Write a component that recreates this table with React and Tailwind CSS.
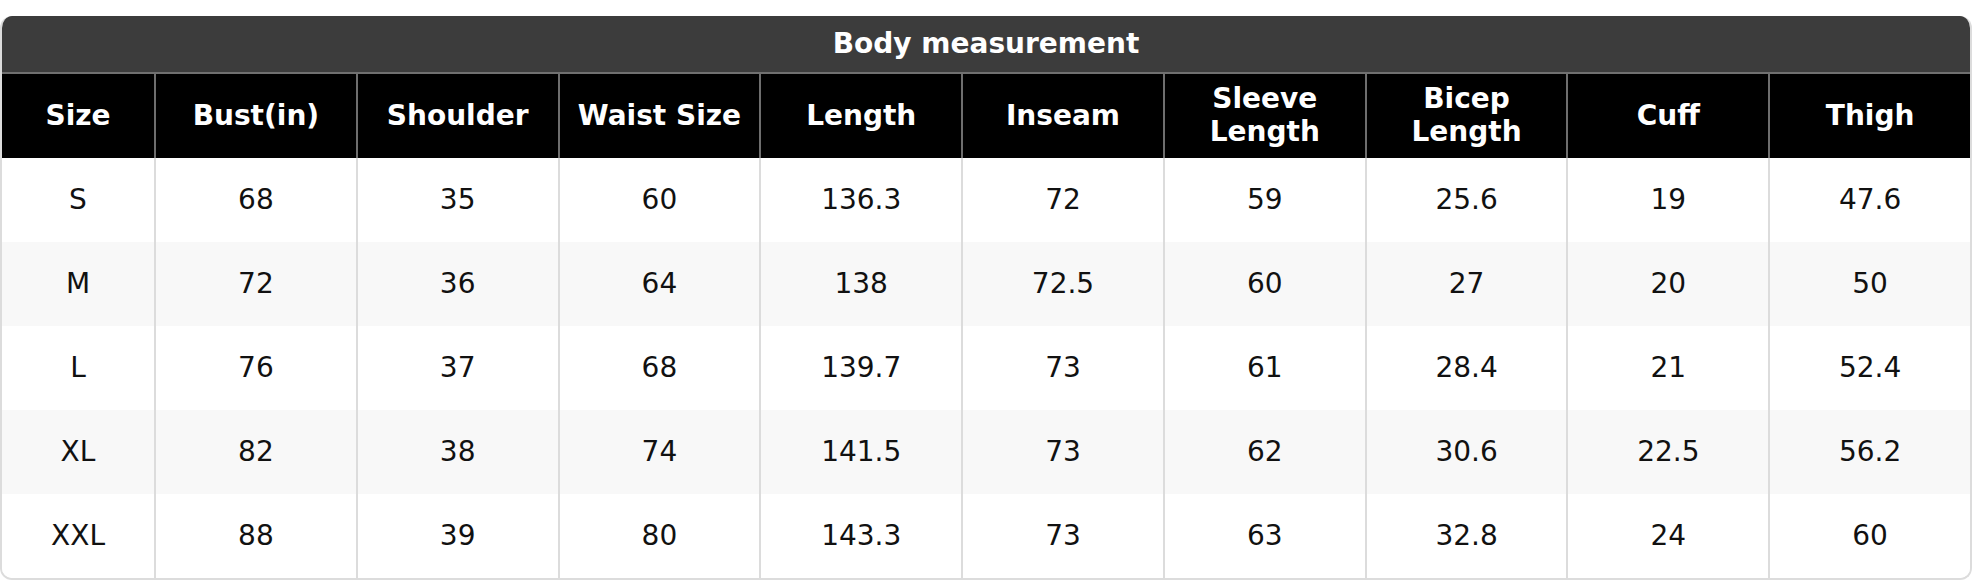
import React from 'react';

const headers = ['Size', 'Bust(in)', 'Shoulder', 'Waist Size', 'Length', 'Inseam', 'Sleeve Length', 'Bicep Length', 'Cuff', 'Thigh'];

const rows = [
  ['S', '68', '35', '60', '136.3', '72', '59', '25.6', '19', '47.6'],
  ['M', '72', '36', '64', '138', '72.5', '60', '27', '20', '50'],
  ['L', '76', '37', '68', '139.7', '73', '61', '28.4', '21', '52.4'],
  ['XL', '82', '38', '74', '141.5', '73', '62', '30.6', '22.5', '56.2'],
  ['XXL', '88', '39', '80', '143.3', '73', '63', '32.8', '24', '60'],
];

const App = () => {
  return (
    <div className="w-[1972px] h-[580px] bg-white pt-4 font-['DejaVu_Sans',sans-serif] text-[28px]">
      <div className="rounded-[12px] border-x-2 border-b-2 border-[#dcdcdc] overflow-hidden">
        {/* tiêu đề */}
        <div className="h-[58px] bg-[#3c3c3c] text-white font-bold flex items-center justify-center border-b-2 border-[#707070] -mx-[2px]">
          Body measurement
        </div>

        {/* hàng tiêu đề cột */}
        <div className="grid grid-cols-[152px_repeat(9,1fr)] h-[84px] bg-black text-white font-bold leading-[33px]">
          {headers.map((h, i) => (
            <div
              key={h}
              className={`flex items-center justify-center text-center px-1 pb-[2px] ${i > 0 ? 'border-l-2 border-[#6e6e6e]' : ''}`}
            >
              {h}
            </div>
          ))}
        </div>

        {/* dữ liệu */}
        {rows.map((r, ri) => (
          <div
            key={r[0]}
            className={`grid grid-cols-[152px_repeat(9,1fr)] h-[84px] text-[#111] ${ri % 2 === 1 ? 'bg-[#f8f8f8]' : 'bg-white'}`}
          >
            {r.map((v, i) => (
              <div
                key={i}
                className={`flex items-center justify-center ${i > 0 ? 'border-l-2 border-[#dcdcdc]' : ''}`}
              >
                {v}
              </div>
            ))}
          </div>
        ))}
      </div>
    </div>
  );
};

export default App;
